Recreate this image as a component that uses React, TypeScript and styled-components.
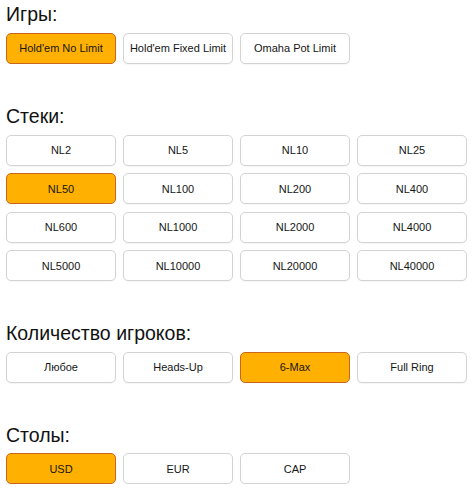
import { useState } from "react";
import styled, { createGlobalStyle } from "styled-components";

const GlobalStyle = createGlobalStyle`
  html, body {
    margin: 0;
    padding: 0;
    background: #fff;
  }
  body {
    font-family: "Liberation Sans", Arial, sans-serif;
  }
`;

const Page = styled.div`
  display: flex;
  flex-direction: column;
  gap: 40px;
  padding: 2.4px 6px 0 6px;
`;

const Section = styled.section`
  display: flex;
  flex-direction: column;
  gap: 6.6px;
`;

const Title = styled.h2`
  margin: 0;
  font-size: 19.5px;
  line-height: 24px;
  font-weight: normal;
  color: #111;
`;

const Grid = styled.div`
  display: grid;
  grid-template-columns: repeat(4, 110px);
  column-gap: 7px;
  row-gap: 7.5px;
`;

const Option = styled.button<{ $active?: boolean }>`
  box-sizing: border-box;
  height: 31px;
  padding: 0;
  border-radius: 5px;
  border: 1px solid ${({ $active }) => ($active ? "#c9651f" : "#d3d3d3")};
  background: ${({ $active }) => ($active ? "#ffb000" : "#fff")};
  color: #161616;
  font-family: "Liberation Sans", Arial, sans-serif;
  font-size: 11px;
  cursor: pointer;
  box-shadow: ${({ $active }) =>
    $active ? "none" : "0 1px 1px rgba(0, 0, 0, 0.04)"};
`;

interface Group {
  title: string;
  options: string[];
  initial: string;
}

const groups: Group[] = [
  {
    title: "Игры:",
    options: ["Hold'em No Limit", "Hold'em Fixed Limit", "Omaha Pot Limit"],
    initial: "Hold'em No Limit",
  },
  {
    title: "Стеки:",
    options: [
      "NL2", "NL5", "NL10", "NL25",
      "NL50", "NL100", "NL200", "NL400",
      "NL600", "NL1000", "NL2000", "NL4000",
      "NL5000", "NL10000", "NL20000", "NL40000",
    ],
    initial: "NL50",
  },
  {
    title: "Количество игроков:",
    options: ["Любое", "Heads-Up", "6-Max", "Full Ring"],
    initial: "6-Max",
  },
  {
    title: "Столы:",
    options: ["USD", "EUR", "CAP"],
    initial: "USD",
  },
];

function OptionGroup({ group }: { group: Group }) {
  const [selected, setSelected] = useState(group.initial);
  return (
    <Section>
      <Title>{group.title}</Title>
      <Grid>
        {group.options.map((opt) => (
          <Option
            key={opt}
            $active={opt === selected}
            onClick={() => setSelected(opt)}
          >
            {opt}
          </Option>
        ))}
      </Grid>
    </Section>
  );
}

export default function App() {
  return (
    <>
      <GlobalStyle />
      <Page>
        {groups.map((g) => (
          <OptionGroup key={g.title} group={g} />
        ))}
      </Page>
    </>
  );
}
